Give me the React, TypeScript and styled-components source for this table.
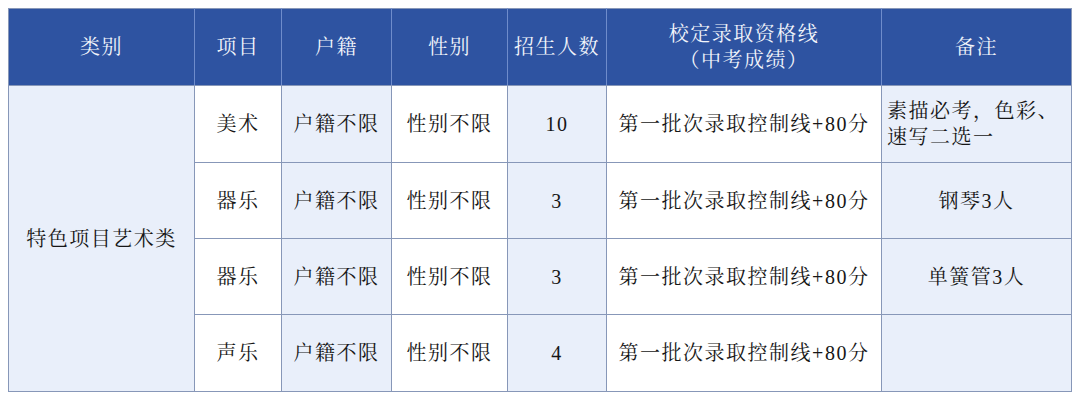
import React from "react";
import styled, { createGlobalStyle } from "styled-components";

const Global = createGlobalStyle`
  html, body { margin: 0; padding: 0; background: #ffffff; }
  body { padding: 8px; }
`;

const FONT = `"Liberation Serif", "Noto Serif CJK SC", "Noto Sans CJK SC", serif`;

const Table = styled.table`
  width: 1063px;
  table-layout: fixed;
  border-collapse: collapse;
  font-family: ${FONT};
  font-size: 20px;
  letter-spacing: 1.5px;
  color: #161616;
  border: 1px solid #8797b8;
`;

const HeadCell = styled.th`
  background: #2e53a1;
  color: #f2f5fb;
  font-weight: 400;
  text-align: center;
  vertical-align: middle;
  line-height: 26px;
  padding: 0;
  border-left: 1px solid #6f8ccb;
  border-right: 1px solid #6f8ccb;
  border-bottom: 1px solid #8797b8;
  &:first-child { border-left: none; }
  &:last-child { border-right: none; }
`;

const Cell = styled.td<{ $tint?: boolean; $left?: boolean }>`
  background: ${(p) => (p.$tint ? "#e9effa" : "#ffffff")};
  text-align: ${(p) => (p.$left ? "left" : "center")};
  vertical-align: middle;
  line-height: 26px;
  padding: ${(p) => (p.$left ? "0 4px 0 5px" : "0")};
  border: 1px solid #8797b8;
`;

const HeadRow = styled.tr`
  height: 77px;
`;

const BodyRow = styled.tr<{ $h: number }>`
  height: ${(p) => p.$h}px;
`;

const widths = [186, 87, 110, 116, 99, 275, 190];

type Row = { item: string; count: string; note: string; noteLeft?: boolean; h: number };

const rows: Row[] = [
  { item: "美术", count: "10", note: "素描必考，色彩、速写二选一", noteLeft: true, h: 77 },
  { item: "器乐", count: "3", note: "钢琴3人", h: 76 },
  { item: "器乐", count: "3", note: "单簧管3人", h: 76 },
  { item: "声乐", count: "4", note: "", h: 77 },
];

export default function App() {
  return (
    <>
      <Global />
      <Table>
        <colgroup>
          {widths.map((w, i) => (
            <col key={i} style={{ width: w }} />
          ))}
        </colgroup>
        <thead>
          <HeadRow>
            <HeadCell>类别</HeadCell>
            <HeadCell>项目</HeadCell>
            <HeadCell>户籍</HeadCell>
            <HeadCell>性别</HeadCell>
            <HeadCell>招生人数</HeadCell>
            <HeadCell>
              校定录取资格线
              <br />
              （中考成绩）
            </HeadCell>
            <HeadCell>备注</HeadCell>
          </HeadRow>
        </thead>
        <tbody>
          {rows.map((r, i) => (
            <BodyRow key={i} $h={r.h}>
              {i === 0 && (
                <Cell $tint rowSpan={rows.length}>
                  特色项目艺术类
                </Cell>
              )}
              <Cell>{r.item}</Cell>
              <Cell $tint>户籍不限</Cell>
              <Cell>性别不限</Cell>
              <Cell $tint>{r.count}</Cell>
              <Cell>第一批次录取控制线+80分</Cell>
              <Cell $tint $left={r.noteLeft}>
                {r.note}
              </Cell>
            </BodyRow>
          ))}
        </tbody>
      </Table>
    </>
  );
}
